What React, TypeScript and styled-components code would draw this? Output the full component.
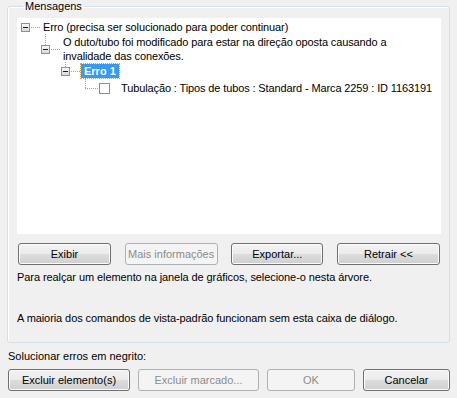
import React from 'react';
import styled, { createGlobalStyle, css } from 'styled-components';

const GlobalStyle = createGlobalStyle`
  html, body {
    margin: 0;
    padding: 0;
    background: #f0f0f0;
  }
  body {
    font-family: "Liberation Sans", Arial, sans-serif;
    font-size: 11px;
    color: #000;
  }
`;

const Dialog = styled.div`
  width: 457px;
  height: 398px;
  box-sizing: border-box;
  padding: 0 7px 0 8px;
  display: flex;
  flex-direction: column;
  background: #f0f0f0;
`;

const Group = styled.fieldset`
  margin: 0 0 0 -1px;
  padding: 0 8px 17px 9px;
  border: 1px solid #d5dfe5;
  border-radius: 3px;
  box-shadow: inset 1px 1px 0 #fff;
  display: flex;
  flex-direction: column;
  min-width: 0;
`;

const Legend = styled.legend`
  padding: 0 2px;
  margin-left: 6px;
  line-height: 13px;
  font-size: 11px;
`;

const TreeArea = styled.div`
  margin-top: 5px;
  height: 216px;
  background: #fff;
  padding: 1px 0 0 4px;
  box-sizing: border-box;
  overflow: hidden;
`;

const Row = styled.div<{ $level: number; $height: number }>`
  display: flex;
  align-items: center;
  height: ${p => p.$height}px;
  padding-left: ${p => p.$level * 20}px;
`;

const Slot = styled.div<{ $width: number; $child?: boolean }>`
  position: relative;
  align-self: stretch;
  width: ${p => p.$width}px;
  flex: none;
  display: flex;
  align-items: center;

  &::after {
    content: '';
    position: absolute;
    left: 4px;
    right: 1px;
    top: 50%;
    border-top: 1px dotted #a0a0a0;
  }

  ${p => p.$child && css`
    &::before {
      content: '';
      position: absolute;
      left: 4px;
      top: -1px;
      height: calc(50% + 1px);
      border-left: 1px dotted #a0a0a0;
    }
  `}
`;

const Expander = styled.span`
  position: relative;
  z-index: 1;
  width: 9px;
  height: 9px;
  box-sizing: border-box;
  border: 1px solid #919191;
  background: linear-gradient(#f7f7f7, #d9d9d9);

  &::after {
    content: '';
    position: absolute;
    left: 1px;
    top: 3px;
    width: 5px;
    height: 1px;
    background: #1c1c1c;
  }
`;

const CheckBox = styled.span`
  width: 11px;
  height: 11px;
  box-sizing: border-box;
  border: 1px solid #8e8f8f;
  background: #fff;
  flex: none;
  margin-right: 9px;
`;

const Label = styled.span<{ $selected?: boolean }>`
  padding: 0 2px;
  line-height: 14px;
  white-space: pre;
  letter-spacing: -0.12px;
  flex: none;
  ${p => p.$selected && css`
    background: #3399ff;
    color: #fff;
    font-weight: bold;
    outline: 1px dotted #f09a35;
    padding: 0 3px;
    letter-spacing: 0;
  `}
`;

const ButtonRow = styled.div<{ $top: number; $inset?: number }>`
  display: flex;
  justify-content: space-between;
  margin-top: ${p => p.$top}px;
  padding: 0 ${p => p.$inset ?? 0}px;
`;

const Button = styled.button<{ $width: number }>`
  width: ${p => p.$width}px;
  height: 22px;
  box-sizing: border-box;
  font-family: "Liberation Sans", Arial, sans-serif;
  font-size: 11px;
  color: #000;
  border: 1px solid #707070;
  border-radius: 3px;
  background: linear-gradient(#f2f2f2 0%, #ebebeb 50%, #dddddd 51%, #cfcfcf 100%);
  box-shadow: inset 0 0 0 1px #fbfbfb;
  padding: 0;

  &:disabled {
    border-color: #adb2b5;
    background: #f4f4f4;
    box-shadow: none;
    color: #8b8b8b;
  }
`;

const Hint = styled.div<{ $top: number }>`
  margin-top: ${p => p.$top}px;
  line-height: 14px;
  letter-spacing: -0.08px;
`;

const Footer = styled.div`
  margin-top: 6px;
  line-height: 14px;
`;

export default function App() {
  return (
    <>
      <GlobalStyle />
      <Dialog>
        <Group>
          <Legend>Mensagens</Legend>
          <TreeArea>
            <Row $level={0} $height={16}>
              <Slot $width={20}><Expander /></Slot>
              <Label>Erro (precisa ser solucionado para poder continuar)</Label>
            </Row>
            <Row $level={1} $height={28}>
              <Slot $width={20} $child><Expander /></Slot>
              <Label>{'O duto/tubo foi modificado para estar na direção oposta causando a\ninvalidade das conexões.'}</Label>
            </Row>
            <Row $level={2} $height={16}>
              <Slot $width={20} $child><Expander /></Slot>
              <Label $selected>Erro 1</Label>
            </Row>
            <Row $level={3} $height={18}>
              <Slot $width={18} $child />
              <CheckBox />
              <Label>Tubulação : Tipos de tubos : Standard - Marca 2259 : ID 1163191</Label>
            </Row>
          </TreeArea>
          <ButtonRow $top={9} $inset={1}>
            <Button $width={93}>Exibir</Button>
            <Button $width={93} disabled>Mais informações</Button>
            <Button $width={92}>Exportar...</Button>
            <Button $width={103}>Retrair &lt;&lt;</Button>
          </ButtonRow>
          <Hint $top={5}>Para realçar um elemento na janela de gráficos, selecione-o nesta árvore.</Hint>
          <Hint $top={27}>A maioria dos comandos de vista-padrão funcionam sem esta caixa de diálogo.</Hint>
        </Group>
        <Footer>Solucionar erros em negrito:</Footer>
        <ButtonRow $top={6}>
          <Button $width={122}>Excluir elemento(s)</Button>
          <Button $width={121} disabled>Excluir marcado...</Button>
          <Button $width={88} disabled>OK</Button>
          <Button $width={87}>Cancelar</Button>
        </ButtonRow>
      </Dialog>
    </>
  );
}
